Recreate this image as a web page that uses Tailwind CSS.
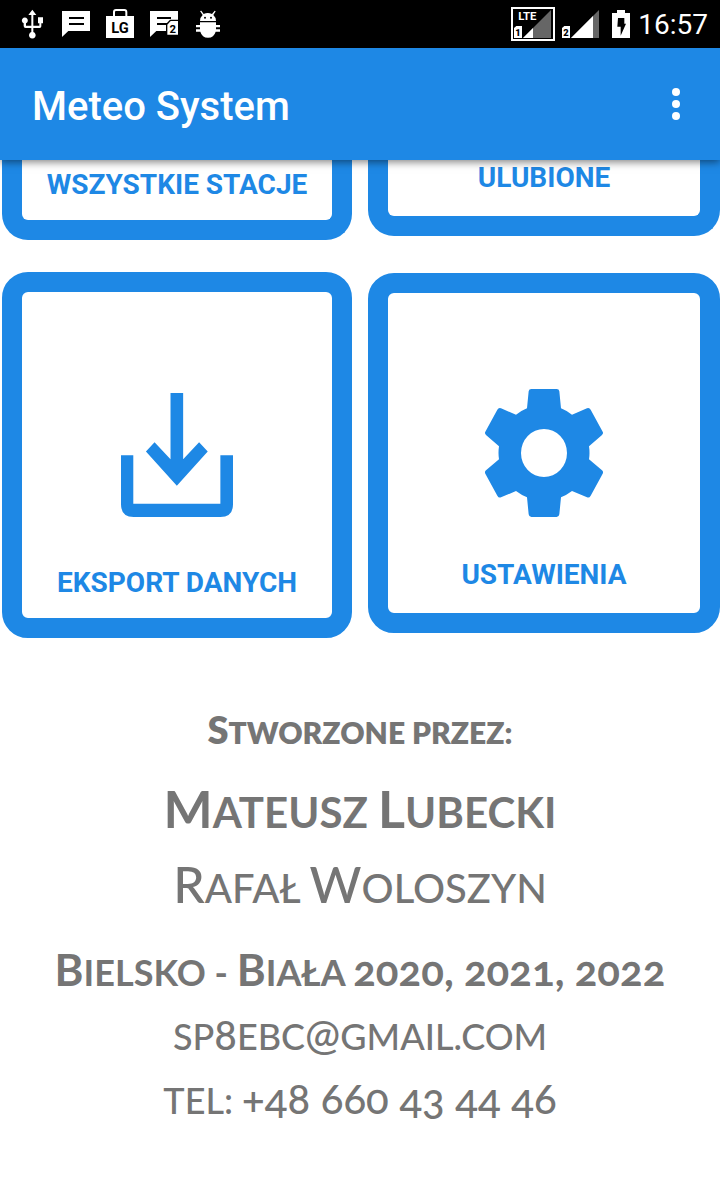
<!DOCTYPE html>
<html lang="pl">
<head>
<meta charset="utf-8">
<meta name="viewport" content="width=device-width, initial-scale=1">
<title>Meteo System</title>
<script src="https://cdn.jsdelivr.net/npm/@tailwindcss/browser@4"></script>
</head>
<body class="min-h-screen bg-white font-['Roboto',sans-serif]">
  <div class="flex h-12 items-center justify-between bg-black pr-3 pl-[18px] text-white">
    <div class="flex gap-4">
      <svg class="h-12 w-7" viewBox="54 0 84 144" fill="currentColor" aria-label="USB">
        <path d="M97 29l12 16h-9v32h18V70h-4V52h15v18h-5v9q0 5-5 5h-19v12a10 10 0 1 1-6 0V84H77q-6 0-6-6v-8a9 9 0 1 1 7 0v7h16V45h-9z"/>
      </svg>
      <svg class="h-12 w-7" viewBox="186 0 84 144" fill="currentColor" aria-label="Wiadomość">
        <path d="M186 33h84v60h-65l-19 18z"/><path d="M207 54h45M207 72h45" stroke="#000" stroke-width="6"/>
      </svg>
      <svg class="h-12 w-7" viewBox="318 0 84 144" fill="currentColor" aria-label="LG">
        <path d="M318 48h21V36q0-9 9-9h25q9 0 9 9v12h20v66h-84zm27 0h31V36q0-3-3-3h-25q-3 0-3 3z" fill-rule="evenodd"/>
        <text x="360" y="98" fill="#000" font-family="Roboto" font-weight="700" font-size="44" text-anchor="middle">LG</text>
      </svg>
      <svg class="h-12 w-7" viewBox="450 0 84 144" fill="currentColor" aria-label="Wiadomość, karta 2">
        <path d="M450 33h84v60h-65l-19 18z"/><path d="M471 54h42M471 72h30" stroke="#000" stroke-width="6"/>
        <path d="M498 108V72l12-13h26v49z" fill="#000"/><path d="M502 104V74l10-11h22v41z"/>
        <text x="518" y="99" fill="#000" font-family="Roboto" font-weight="700" font-size="34" text-anchor="middle">2</text>
      </svg>
      <svg class="h-12 w-7" viewBox="582 0 84 144" fill="currentColor" aria-label="Debugowanie">
        <path d="M600 33l4-1 7 10q12-6 25 0l8-10 3 2-7 11q8 7 8 18h-48q0-11 8-18z"/>
        <path d="M588 75h12v-8h48v8h12v7h-12v6h12v7h-13q-5 18-23 18t-23-18h-13v-7h12v-6h-12z"/>
        <circle cx="615" cy="53" r="3" fill="#000"/><circle cx="633" cy="53" r="3" fill="#000"/>
      </svg>
    </div>
    <div class="flex items-center">
      <svg class="h-12 w-11" viewBox="63 0 132 144" fill="currentColor" aria-label="LTE, karta 1">
        <path d="M66 24h126v96H66z" fill="none" stroke="currentColor" stroke-width="6"/>
        <path d="M183 30v84h-84z" fill="#666"/><path d="M129 84v30H99z"/>
        <path d="M72 114V84l7-6h17v36z"/>
        <text x="112" y="60" font-family="Roboto" font-weight="700" font-size="34" text-anchor="middle">LTE</text>
        <text x="84" y="107" fill="#000" font-family="Roboto" font-weight="900" font-size="28" text-anchor="middle">1</text>
      </svg>
      <svg class="ml-1.5 h-12 w-[38px]" viewBox="213 0 114 144" fill="currentColor" aria-label="Sygnał, karta 2">
        <path d="M327 30v84h-84z" fill="#666"/><path d="M309 48v66h-66z"/>
        <path d="M216 114V84l7-6h17v36z"/>
        <text x="228" y="107" fill="#000" font-family="Roboto" font-weight="900" font-size="28" text-anchor="middle">2</text>
      </svg>
      <svg class="ml-[13px] h-12 w-[18px]" viewBox="366 0 54 144" fill="currentColor" aria-label="Ładowanie">
        <path d="M366 39h15v-9h24v9h15v75h-54z"/><path d="M384 54h19v17h5l-16 36V80h-10z" fill="#000"/>
      </svg>
      <span class="ml-2 pt-0.5 text-[28px] leading-8">16:57</span>
    </div>
  </div>

  <header class="relative z-10 flex h-28 items-center justify-between bg-[#1e88e5] pr-6 pl-8 text-white shadow-[0_2px_8px_rgba(0,0,0,0.5)]">
    <h1 class="pt-1.5 text-[40px] leading-12 font-medium">Meteo System</h1>
    <button type="button" aria-label="Więcej opcji" class="flex h-12 w-10 items-center justify-center">
      <svg class="h-8 w-2" viewBox="0 0 8 32" fill="currentColor"><circle cx="4" cy="4" r="4"/><circle cx="4" cy="16" r="4"/><circle cx="4" cy="28" r="4"/></svg>
    </button>
  </header>

  <main>
    <div class="grid grid-cols-[350fr_352fr] gap-4 pl-0.5 text-[28px] leading-8 font-bold text-[#1e88e5]">
      <div class="flex flex-col gap-8">
        <button type="button" class="rounded-b-[26px] border-20 border-t-0 border-[#1e88e5] pt-[9px] pb-[19px]">WSZYSTKIE STACJE</button>
        <button type="button" class="flex flex-col items-center gap-[50px] rounded-[26px] border-20 border-[#1e88e5] pt-[101px] pb-[19px]">
          <svg class="h-[124px] w-28" viewBox="93 68 337 373" fill="currentColor" aria-hidden="true">
            <path d="M242 68h38v199l48-51 26 28-93 103-93-103 26-28 48 51z"/>
            <path d="M93 255h37v146h262V255h38v148q0 38-38 38H131q-38 0-38-38z"/>
          </svg>
          <span>EKSPORT DANYCH</span>
        </button>
      </div>
      <div class="flex flex-col gap-[37px]">
        <button type="button" class="rounded-b-[26px] border-20 border-t-0 border-[#1e88e5] pt-0.5 pb-[22px]">ULUBIONE</button>
        <button type="button" class="flex flex-col items-center gap-[42px] rounded-[26px] border-20 border-[#1e88e5] pt-24 pb-[22px]">
          <svg class="h-32 w-[118px]" viewBox="135 57 354 384" fill="currentColor" fill-rule="evenodd" aria-hidden="true">
            <path d="M266 64Q267 57 274 57H350Q357 57 358 64L363 115Q380 122 396 134L441 115Q448 112 452 119L488 185Q491 190 486 195L447 229Q450 249 447 268L486 301Q491 305 488 311L452 377Q448 385 441 382L396 363Q380 375 363 382L358 433Q357 441 350 441H274Q267 441 266 433L261 382Q244 375 228 363L183 382Q176 385 172 377L136 311Q133 305 138 301L177 268Q174 249 177 229L138 195Q133 190 136 185L172 119Q176 112 183 115L228 134Q244 122 261 115ZM312 177A69 72 0 1 0 312 321A69 72 0 1 0 312 177Z"/>
          </svg>
          <span>USTAWIENIA</span>
        </button>
      </div>
    </div>

    <footer class="pt-[62px] pb-8 text-center font-['Lato',sans-serif] leading-16 text-[#757575] uppercase oldstyle-nums">
      <p class="text-[30px] font-extrabold"><span class="text-[38px] leading-none">S</span>tworzone przez:</p>
      <p class="mt-4 text-[42px] font-bold"><span class="text-[52px] leading-none">M</span>ateusz <span class="text-[52px] leading-none">L</span>ubecki</p>
      <p class="mt-3 text-[40px] font-medium"><span class="text-[50px] leading-none">R</span>afał <span class="text-[50px] leading-none">W</span>oloszyn</p>
      <p class="mt-5 text-[36px] font-bold"><span class="text-[44px] leading-none">B</span>ielsko - <span class="text-[44px] leading-none">B</span>iała <span class="text-[42px] leading-none">2020, 2021, 2022</span></p>
      <p class="text-[36px] font-medium"><a href="mailto:sp8ebc@gmail.com">sp<span class="text-[42px] leading-none">8</span>ebc<span class="text-[42px] leading-none">@</span>gmail.com</a></p>
      <p class="text-[36px] font-medium"><a href="tel:+48660434446">tel: <span class="text-[42px] leading-none">+48 660 43 44 46</span></a></p>
    </footer>
  </main>
</body>
</html>
